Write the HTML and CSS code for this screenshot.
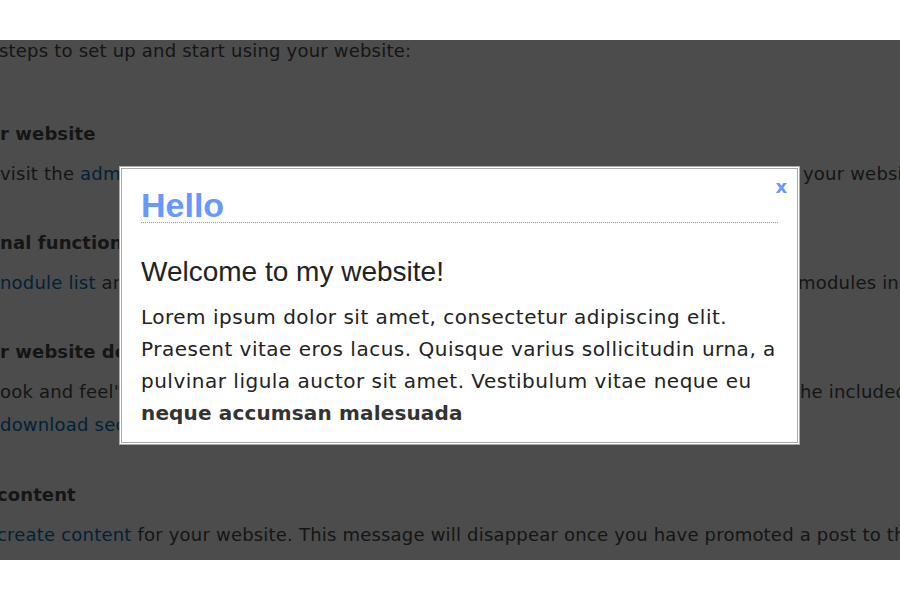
FILE: index.html
```html
<!DOCTYPE html>
<html lang="en">
<head>
    <meta charset="UTF-8">
    <meta name="viewport" content="width=device-width, initial-scale=1.0">
    <title>Welcome</title>
    <link rel="stylesheet" href="styles.css">
</head>
<body>
    <div class="stage">
        <div class="page">
            <p class="intro">steps to set up and start using your website:</p>

            <h3 class="step">r website</h3>
            <p class="split">
                <span class="left">visit the <a href="#">administration section</a>, where you can customize and configure all aspects of</span>
                <span class="right r1">your website.</span>
            </p>

            <h3 class="step">nal functionality</h3>
            <p class="split">
                <span class="left"><a href="#">nodule list</a> and enable features which suit your specific needs. You can find additional</span>
                <span class="right r2">modules in the Drupal modules download section.</span>
            </p>

            <h3 class="step">r website design</h3>
            <p class="split">
                <span class="left">ook and feel" of your website, visit the themes section. You may choose from one of</span>
                <span class="right r3">he included themes or</span>
            </p>
            <p class="line"><a href="#">download section</a>.</p>

            <h3 class="step last clip">content</h3>
            <p class="line clip"><a href="#">create content</a> for your website. This message will disappear once you have promoted a post to the front page.</p>
        </div>

        <div class="overlay"></div>

        <div class="modal">
            <a class="close" href="#">x</a>
            <h2 class="modal-title">Hello</h2>
            <h3 class="modal-sub">Welcome to my website!</h3>
            <p class="modal-text">Lorem ipsum dolor sit amet, consectetur adipiscing elit. Praesent vitae eros lacus. Quisque varius sollicitudin urna, a pulvinar ligula auctor sit amet. Vestibulum vitae neque eu <b>neque accumsan malesuada</b></p>
        </div>
    </div>
</body>
</html>
```

FILE: styles.css
```css
*{
    margin: 0;
    padding: 0;
}
body{
    background: #fff;
}
.stage{
    position: relative;
    height: 520px;
    margin: 40px 0;
    overflow: hidden;
}

/* page behind the overlay */
.page{
    font-family: "DejaVu Sans", Verdana, sans-serif;
    font-size: 18px;
    line-height: 33px;
    letter-spacing: 0.2px;
    color: #494949;
    white-space: nowrap;
}
.page a{
    color: #0271b8;
    text-decoration: none;
}
.intro{
    margin-top: -6px;
    margin-left: -1px;
}
.step{
    font-size: 18px;
    font-weight: bold;
    letter-spacing: 0.1px;
    margin-top: 50px;
}
.split + .step,
.line + .step{
    margin-top: 36px;
}
.step.last{
    margin-top: 37px;
}
.split{
    margin-top: 7px;
    display: grid;
    grid-template-columns: 798px max-content;
    overflow: hidden;
}
.split .left{
    overflow: hidden;
}
.line{
    margin-top: 0;
}
.step + .line{
    margin-top: 7px;
}
.r1{
    padding-left: 5px;
}
.r2{
    padding-left: 0;
}
.r3{
    padding-left: 2px;
}
.clip{
    margin-left: -3px;
}

.overlay{
    position: absolute;
    top: 0;
    left: 0;
    right: 0;
    bottom: 0;
    background: rgba(0, 0, 0, 0.7);
}

/* modal box */
.modal{
    position: absolute;
    top: 126px;
    left: 119px;
    width: 637px;
    padding: 19px 19px 13px;
    background: #fff;
    border: 3px double #aaa;
}
.close{
    position: absolute;
    top: 9px;
    right: 10px;
    font-family: "DejaVu Sans", Verdana, sans-serif;
    font-size: 18px;
    line-height: 1;
    font-weight: bold;
    color: #69f;
    text-decoration: none;
}
.modal-title{
    font-family: "Liberation Sans", Arial, sans-serif;
    font-size: 34px;
    line-height: 34px;
    font-weight: bold;
    color: #69f;
    border-bottom: 1px dotted #999;
}
.modal-sub{
    margin-top: 35px;
    font-family: "Liberation Sans", Arial, sans-serif;
    font-size: 28px;
    line-height: 28px;
    font-weight: normal;
    color: #222;
}
.modal-text{
    margin-top: 15px;
    font-family: "DejaVu Sans", Verdana, sans-serif;
    font-size: 20px;
    line-height: 32px;
    letter-spacing: 0.5px;
    color: #222;
}
.modal-text b{
    letter-spacing: 0.15px;
    color: #333;
}
```
